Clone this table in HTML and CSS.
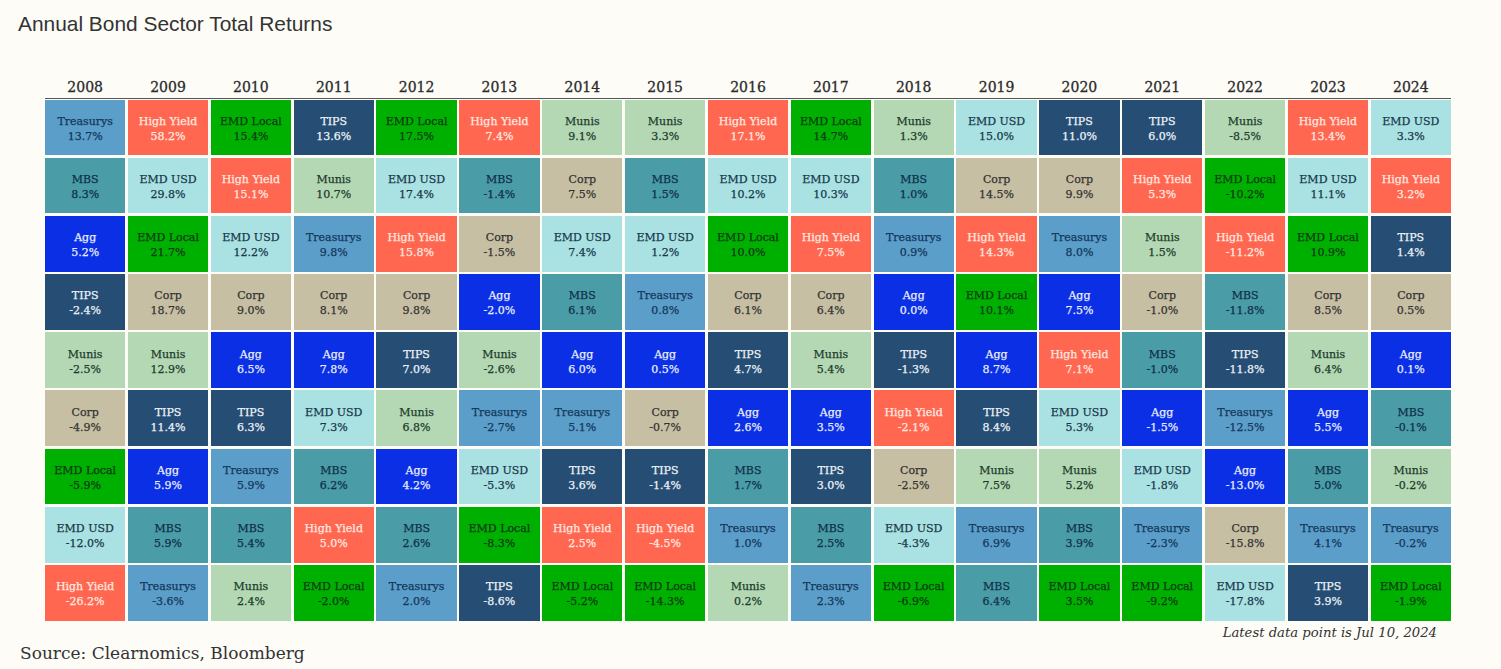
FILE: index.html
```html
<!DOCTYPE html>
<html lang="en">
<head>
<meta charset="utf-8">
<title>Annual Bond Sector Total Returns</title>
<link rel="stylesheet" href="styles.css">
</head>
<body>
<div class="page">
  <h1 class="title">Annual Bond Sector Total Returns</h1>
  <div class="chart">
    <div class="years">
      <span>2008</span><span>2009</span><span>2010</span><span>2011</span><span>2012</span><span>2013</span><span>2014</span><span>2015</span><span>2016</span><span>2017</span><span>2018</span><span>2019</span><span>2020</span><span>2021</span><span>2022</span><span>2023</span><span>2024</span>
    </div>
    <div class="grid">
      <!-- 2008 -->
      <div class="cell tre"><span>Treasurys</span><span>13.7%</span></div>
      <div class="cell mbs"><span>MBS</span><span>8.3%</span></div>
      <div class="cell agg"><span>Agg</span><span>5.2%</span></div>
      <div class="cell tips"><span>TIPS</span><span>-2.4%</span></div>
      <div class="cell mun"><span>Munis</span><span>-2.5%</span></div>
      <div class="cell corp"><span>Corp</span><span>-4.9%</span></div>
      <div class="cell eml"><span>EMD Local</span><span>-5.9%</span></div>
      <div class="cell emu"><span>EMD USD</span><span>-12.0%</span></div>
      <div class="cell hy"><span>High Yield</span><span>-26.2%</span></div>
      <!-- 2009 -->
      <div class="cell hy"><span>High Yield</span><span>58.2%</span></div>
      <div class="cell emu"><span>EMD USD</span><span>29.8%</span></div>
      <div class="cell eml"><span>EMD Local</span><span>21.7%</span></div>
      <div class="cell corp"><span>Corp</span><span>18.7%</span></div>
      <div class="cell mun"><span>Munis</span><span>12.9%</span></div>
      <div class="cell tips"><span>TIPS</span><span>11.4%</span></div>
      <div class="cell agg"><span>Agg</span><span>5.9%</span></div>
      <div class="cell mbs"><span>MBS</span><span>5.9%</span></div>
      <div class="cell tre"><span>Treasurys</span><span>-3.6%</span></div>
      <!-- 2010 -->
      <div class="cell eml"><span>EMD Local</span><span>15.4%</span></div>
      <div class="cell hy"><span>High Yield</span><span>15.1%</span></div>
      <div class="cell emu"><span>EMD USD</span><span>12.2%</span></div>
      <div class="cell corp"><span>Corp</span><span>9.0%</span></div>
      <div class="cell agg"><span>Agg</span><span>6.5%</span></div>
      <div class="cell tips"><span>TIPS</span><span>6.3%</span></div>
      <div class="cell tre"><span>Treasurys</span><span>5.9%</span></div>
      <div class="cell mbs"><span>MBS</span><span>5.4%</span></div>
      <div class="cell mun"><span>Munis</span><span>2.4%</span></div>
      <!-- 2011 -->
      <div class="cell tips"><span>TIPS</span><span>13.6%</span></div>
      <div class="cell mun"><span>Munis</span><span>10.7%</span></div>
      <div class="cell tre"><span>Treasurys</span><span>9.8%</span></div>
      <div class="cell corp"><span>Corp</span><span>8.1%</span></div>
      <div class="cell agg"><span>Agg</span><span>7.8%</span></div>
      <div class="cell emu"><span>EMD USD</span><span>7.3%</span></div>
      <div class="cell mbs"><span>MBS</span><span>6.2%</span></div>
      <div class="cell hy"><span>High Yield</span><span>5.0%</span></div>
      <div class="cell eml"><span>EMD Local</span><span>-2.0%</span></div>
      <!-- 2012 -->
      <div class="cell eml"><span>EMD Local</span><span>17.5%</span></div>
      <div class="cell emu"><span>EMD USD</span><span>17.4%</span></div>
      <div class="cell hy"><span>High Yield</span><span>15.8%</span></div>
      <div class="cell corp"><span>Corp</span><span>9.8%</span></div>
      <div class="cell tips"><span>TIPS</span><span>7.0%</span></div>
      <div class="cell mun"><span>Munis</span><span>6.8%</span></div>
      <div class="cell agg"><span>Agg</span><span>4.2%</span></div>
      <div class="cell mbs"><span>MBS</span><span>2.6%</span></div>
      <div class="cell tre"><span>Treasurys</span><span>2.0%</span></div>
      <!-- 2013 -->
      <div class="cell hy"><span>High Yield</span><span>7.4%</span></div>
      <div class="cell mbs"><span>MBS</span><span>-1.4%</span></div>
      <div class="cell corp"><span>Corp</span><span>-1.5%</span></div>
      <div class="cell agg"><span>Agg</span><span>-2.0%</span></div>
      <div class="cell mun"><span>Munis</span><span>-2.6%</span></div>
      <div class="cell tre"><span>Treasurys</span><span>-2.7%</span></div>
      <div class="cell emu"><span>EMD USD</span><span>-5.3%</span></div>
      <div class="cell eml"><span>EMD Local</span><span>-8.3%</span></div>
      <div class="cell tips"><span>TIPS</span><span>-8.6%</span></div>
      <!-- 2014 -->
      <div class="cell mun"><span>Munis</span><span>9.1%</span></div>
      <div class="cell corp"><span>Corp</span><span>7.5%</span></div>
      <div class="cell emu"><span>EMD USD</span><span>7.4%</span></div>
      <div class="cell mbs"><span>MBS</span><span>6.1%</span></div>
      <div class="cell agg"><span>Agg</span><span>6.0%</span></div>
      <div class="cell tre"><span>Treasurys</span><span>5.1%</span></div>
      <div class="cell tips"><span>TIPS</span><span>3.6%</span></div>
      <div class="cell hy"><span>High Yield</span><span>2.5%</span></div>
      <div class="cell eml"><span>EMD Local</span><span>-5.2%</span></div>
      <!-- 2015 -->
      <div class="cell mun"><span>Munis</span><span>3.3%</span></div>
      <div class="cell mbs"><span>MBS</span><span>1.5%</span></div>
      <div class="cell emu"><span>EMD USD</span><span>1.2%</span></div>
      <div class="cell tre"><span>Treasurys</span><span>0.8%</span></div>
      <div class="cell agg"><span>Agg</span><span>0.5%</span></div>
      <div class="cell corp"><span>Corp</span><span>-0.7%</span></div>
      <div class="cell tips"><span>TIPS</span><span>-1.4%</span></div>
      <div class="cell hy"><span>High Yield</span><span>-4.5%</span></div>
      <div class="cell eml"><span>EMD Local</span><span>-14.3%</span></div>
      <!-- 2016 -->
      <div class="cell hy"><span>High Yield</span><span>17.1%</span></div>
      <div class="cell emu"><span>EMD USD</span><span>10.2%</span></div>
      <div class="cell eml"><span>EMD Local</span><span>10.0%</span></div>
      <div class="cell corp"><span>Corp</span><span>6.1%</span></div>
      <div class="cell tips"><span>TIPS</span><span>4.7%</span></div>
      <div class="cell agg"><span>Agg</span><span>2.6%</span></div>
      <div class="cell mbs"><span>MBS</span><span>1.7%</span></div>
      <div class="cell tre"><span>Treasurys</span><span>1.0%</span></div>
      <div class="cell mun"><span>Munis</span><span>0.2%</span></div>
      <!-- 2017 -->
      <div class="cell eml"><span>EMD Local</span><span>14.7%</span></div>
      <div class="cell emu"><span>EMD USD</span><span>10.3%</span></div>
      <div class="cell hy"><span>High Yield</span><span>7.5%</span></div>
      <div class="cell corp"><span>Corp</span><span>6.4%</span></div>
      <div class="cell mun"><span>Munis</span><span>5.4%</span></div>
      <div class="cell agg"><span>Agg</span><span>3.5%</span></div>
      <div class="cell tips"><span>TIPS</span><span>3.0%</span></div>
      <div class="cell mbs"><span>MBS</span><span>2.5%</span></div>
      <div class="cell tre"><span>Treasurys</span><span>2.3%</span></div>
      <!-- 2018 -->
      <div class="cell mun"><span>Munis</span><span>1.3%</span></div>
      <div class="cell mbs"><span>MBS</span><span>1.0%</span></div>
      <div class="cell tre"><span>Treasurys</span><span>0.9%</span></div>
      <div class="cell agg"><span>Agg</span><span>0.0%</span></div>
      <div class="cell tips"><span>TIPS</span><span>-1.3%</span></div>
      <div class="cell hy"><span>High Yield</span><span>-2.1%</span></div>
      <div class="cell corp"><span>Corp</span><span>-2.5%</span></div>
      <div class="cell emu"><span>EMD USD</span><span>-4.3%</span></div>
      <div class="cell eml"><span>EMD Local</span><span>-6.9%</span></div>
      <!-- 2019 -->
      <div class="cell emu"><span>EMD USD</span><span>15.0%</span></div>
      <div class="cell corp"><span>Corp</span><span>14.5%</span></div>
      <div class="cell hy"><span>High Yield</span><span>14.3%</span></div>
      <div class="cell eml"><span>EMD Local</span><span>10.1%</span></div>
      <div class="cell agg"><span>Agg</span><span>8.7%</span></div>
      <div class="cell tips"><span>TIPS</span><span>8.4%</span></div>
      <div class="cell mun"><span>Munis</span><span>7.5%</span></div>
      <div class="cell tre"><span>Treasurys</span><span>6.9%</span></div>
      <div class="cell mbs"><span>MBS</span><span>6.4%</span></div>
      <!-- 2020 -->
      <div class="cell tips"><span>TIPS</span><span>11.0%</span></div>
      <div class="cell corp"><span>Corp</span><span>9.9%</span></div>
      <div class="cell tre"><span>Treasurys</span><span>8.0%</span></div>
      <div class="cell agg"><span>Agg</span><span>7.5%</span></div>
      <div class="cell hy"><span>High Yield</span><span>7.1%</span></div>
      <div class="cell emu"><span>EMD USD</span><span>5.3%</span></div>
      <div class="cell mun"><span>Munis</span><span>5.2%</span></div>
      <div class="cell mbs"><span>MBS</span><span>3.9%</span></div>
      <div class="cell eml"><span>EMD Local</span><span>3.5%</span></div>
      <!-- 2021 -->
      <div class="cell tips"><span>TIPS</span><span>6.0%</span></div>
      <div class="cell hy"><span>High Yield</span><span>5.3%</span></div>
      <div class="cell mun"><span>Munis</span><span>1.5%</span></div>
      <div class="cell corp"><span>Corp</span><span>-1.0%</span></div>
      <div class="cell mbs"><span>MBS</span><span>-1.0%</span></div>
      <div class="cell agg"><span>Agg</span><span>-1.5%</span></div>
      <div class="cell emu"><span>EMD USD</span><span>-1.8%</span></div>
      <div class="cell tre"><span>Treasurys</span><span>-2.3%</span></div>
      <div class="cell eml"><span>EMD Local</span><span>-9.2%</span></div>
      <!-- 2022 -->
      <div class="cell mun"><span>Munis</span><span>-8.5%</span></div>
      <div class="cell eml"><span>EMD Local</span><span>-10.2%</span></div>
      <div class="cell hy"><span>High Yield</span><span>-11.2%</span></div>
      <div class="cell mbs"><span>MBS</span><span>-11.8%</span></div>
      <div class="cell tips"><span>TIPS</span><span>-11.8%</span></div>
      <div class="cell tre"><span>Treasurys</span><span>-12.5%</span></div>
      <div class="cell agg"><span>Agg</span><span>-13.0%</span></div>
      <div class="cell corp"><span>Corp</span><span>-15.8%</span></div>
      <div class="cell emu"><span>EMD USD</span><span>-17.8%</span></div>
      <!-- 2023 -->
      <div class="cell hy"><span>High Yield</span><span>13.4%</span></div>
      <div class="cell emu"><span>EMD USD</span><span>11.1%</span></div>
      <div class="cell eml"><span>EMD Local</span><span>10.9%</span></div>
      <div class="cell corp"><span>Corp</span><span>8.5%</span></div>
      <div class="cell mun"><span>Munis</span><span>6.4%</span></div>
      <div class="cell agg"><span>Agg</span><span>5.5%</span></div>
      <div class="cell mbs"><span>MBS</span><span>5.0%</span></div>
      <div class="cell tre"><span>Treasurys</span><span>4.1%</span></div>
      <div class="cell tips"><span>TIPS</span><span>3.9%</span></div>
      <!-- 2024 -->
      <div class="cell emu"><span>EMD USD</span><span>3.3%</span></div>
      <div class="cell hy"><span>High Yield</span><span>3.2%</span></div>
      <div class="cell tips"><span>TIPS</span><span>1.4%</span></div>
      <div class="cell corp"><span>Corp</span><span>0.5%</span></div>
      <div class="cell agg"><span>Agg</span><span>0.1%</span></div>
      <div class="cell mbs"><span>MBS</span><span>-0.1%</span></div>
      <div class="cell mun"><span>Munis</span><span>-0.2%</span></div>
      <div class="cell tre"><span>Treasurys</span><span>-0.2%</span></div>
      <div class="cell eml"><span>EMD Local</span><span>-1.9%</span></div>
    </div>
    <div class="note">Latest data point is Jul 10, 2024</div>
  </div>
  <div class="source">Source: Clearnomics, Bloomberg</div>
</div>
</body>
</html>
```
FILE: styles.css
```css
html, body {
  margin: 0;
  padding: 0;
  background: #fdfcf7;
}
.page {
  width: 1501px;
  height: 669px;
  padding-top: 12px;
  box-sizing: border-box;
  overflow: hidden;
}
.title {
  margin: 0 0 0 18px;
  font-family: "Liberation Sans", Arial, sans-serif;
  font-weight: normal;
  font-size: 20.9px;
  line-height: 24px;
  color: #333;
}
.chart {
  margin-left: 45px;
  width: 1406px;
}
.years {
  margin-top: 40px;
  display: grid;
  grid-template-columns: repeat(17, 1fr);
  column-gap: 2.5px;
  border-bottom: 1.5px solid #555;
  font-family: "DejaVu Serif", serif;
  font-size: 14px;
  line-height: 22px;
  color: #2b2b2b;
  text-align: center;
  -webkit-text-stroke: 0.3px currentColor;
}
.grid {
  margin-top: 0.5px;
  display: grid;
  grid-template-columns: repeat(17, 1fr);
  grid-template-rows: repeat(9, 55.7px);
  grid-auto-flow: column;
  gap: 2.5px;
}
.cell {
  display: flex;
  flex-direction: column;
  align-items: center;
  justify-content: center;
  font-family: "DejaVu Serif", serif;
  font-size: 11px;
  line-height: 15px;
  padding-top: 3px;
  box-sizing: border-box;
  -webkit-text-stroke: 0.25px currentColor;
}
.tre { background: #5a9ec9; color: #14365a; }
.hy { background: #ff6750; color: #ffe9e0; }
.eml { background: #00b000; color: #0c3a12; }
.tips { background: #264e74; color: #eef2f7; }
.mun { background: #b3d8b3; color: #1d3a2c; }
.mbs { background: #4a9ca7; color: #0f2f48; }
.emu { background: #aae1e3; color: #17384a; }
.agg { background: #0a2fe4; color: #e9edff; }
.corp { background: #c7bfa3; color: #333; }
.note {
  margin-top: 3px;
  padding-right: 14px;
  text-align: right;
  font-family: "DejaVu Serif", serif;
  font-style: italic;
  font-size: 13.2px;
  line-height: 18px;
  color: #333;
}
.source {
  margin-left: 20px;
  font-family: "DejaVu Serif", serif;
  font-size: 17px;
  line-height: 22px;
  color: #333;
}
```
